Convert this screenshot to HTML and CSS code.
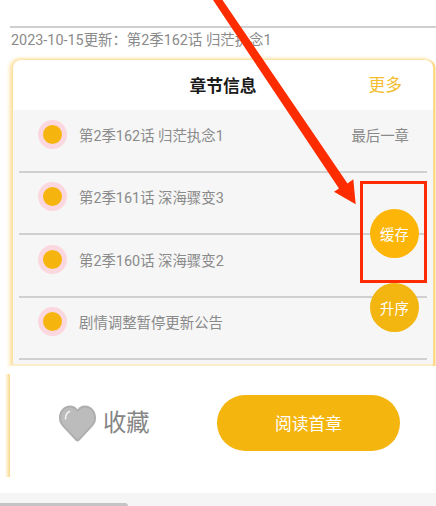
FILE: index.html
```html
<!DOCTYPE html>
<html lang="zh">
<head>
<meta charset="utf-8">
<title>章节信息</title>
<link rel="stylesheet" href="styles.css">
</head>
<body>
<div class="page">
  <div class="rule"></div>
  <p class="update">2023-10-15更新：第2季162话 归茫执念1</p>
  <section class="card">
    <header class="card-head">
      <h2 class="card-title">章节信息</h2>
      <span class="more">更多</span>
    </header>
    <ul class="list">
      <li class="row"><span class="dot"></span><span class="name">第2季162话 归茫执念1</span><span class="tag">最后一章</span></li>
      <li class="row"><span class="dot"></span><span class="name">第2季161话 深海骤变3</span></li>
      <li class="row"><span class="dot"></span><span class="name">第2季160话 深海骤变2</span></li>
      <li class="row"><span class="dot"></span><span class="name">剧情调整暂停更新公告</span></li>
    </ul>
  </section>
  <div class="bar">
    <div class="fav">
      <svg class="heart" viewBox="0 0 37 37" aria-hidden="true">
        <path d="M18.500 36.500C17.500 36.500 16.800 35.800 15.800 34.800L3.500 21.500C.5 18.200 0 15.500 0 12.500C0 5.500 5 .5 11 .5C14 .5 17 2 18.500 4.500C20 2 23 .5 26 .5C32 .5 37 5.500 37 12.500C37 15.500 36.500 18.200 33.500 21.500L21.200 34.800C20.200 35.800 19.500 36.500 18.500 36.500Z" fill="#aeaeae"/>
        <path d="M18.500 34C17.800 34 17.300 33.500 16.800 33L5 20.500C2.500 17.500 2 15 2 12.500C2 6.500 6.200 2.500 11 2.500C14 2.500 17 4.500 18.500 7.500C20 4.500 23 2.500 26 2.500C30.800 2.500 35 6.500 35 12.500C35 15 34.500 17.500 32 20.500L20.200 33C19.700 33.500 19.200 34 18.500 34Z" fill="#bcbcbc"/>
        <path d="M6.500 14C6.500 10 8 7.500 10.500 6.500" fill="none" stroke="#f2f2f2" stroke-width="1.600" stroke-linecap="round"/>
      </svg>
      <span class="fav-text">收藏</span>
    </div>
    <button class="read" type="button">阅读首章</button>
  </div>
  <div class="footer"><div class="thumb"></div></div>

  <div class="fab fab-cache">缓存</div>
  <div class="fab fab-sort">升序</div>
  <div class="mark-box"></div>
  <svg class="arrow" viewBox="0 0 436 506" aria-hidden="true">
    <path d="M213 0H222.500L347.500 183.500L353.300 179.300L355.700 204.300L334 191.700L339 188.500Z" fill="#ff2c00"/>
  </svg>
</div>
</body>
</html>
```
FILE: styles.css
```css
* { box-sizing: border-box; }
html, body { margin: 0; padding: 0; background: #fff; }
body { font-family: Roboto, "Noto Sans CJK SC", sans-serif; }

.page {
  position: relative;
  width: 436px;
  height: 506px;
  overflow: hidden;
  display: flex;
  flex-direction: column;
  background: #fff;
}

.rule {
  height: 2px;
  margin: 26px 0 0 10px;
  background: #cfcfcf;
  flex: none;
}
.update {
  margin: 3px 0 0 11px;
  height: 20px;
  font-size: 14.400px;
  line-height: 20px;
  color: #8a8a8a;
  white-space: nowrap;
  flex: none;
}

.card {
  flex: none;
  width: 420px;
  height: 306px;
  margin: 9px 0 0 13px;
  background: #fff;
  border-radius: 8px 8px 0 0;
  box-shadow: -2px 0 4px 1px #fcdd98, 0 -1px 2px #fde7b5, 2.500px 0 0 #fcd680;
  overflow: hidden;
}
.card-head {
  position: relative;
  height: 50px;
  padding-bottom: 1px;
  display: flex;
  align-items: center;
  justify-content: center;
}
.card-title {
  margin: 0;
  font-size: 16.800px;
  font-weight: 700;
  color: #1a1a1a;
}
.more {
  position: absolute;
  right: 31px;
  top: 13px;
  font-size: 16.800px;
  line-height: 24px;
  color: #f5bd30;
}

.list {
  margin: 0;
  padding: 0 6px;
  list-style: none;
  height: 256px;
  background: #f6f6f6;
  border-bottom: 2px solid #fdeecb;
}
.row {
  height: 62.600px;
  display: flex;
  align-items: center;
  padding: 0 18px 12.600px 18.500px;
  border-bottom: 2px solid #d0d0d0;
  font-size: 14.400px;
  color: #8a8a8a;
}
.dot {
  width: 29px;
  height: 29px;
  flex: none;
  border-radius: 50%;
  background: #f6b50e;
  border: 5px solid #fbd8df;
  margin-right: 12.500px;
}
.name { flex: 1; white-space: nowrap; }
.tag { white-space: nowrap; }

.bar {
  position: relative;
  flex: none;
  height: 111px;
  margin-left: 10px;
  padding: 3px 0 0 49px;
  background: #fff;
  display: flex;
  align-items: center;
  z-index: 1;
}
.bar::before {
  content: "";
  position: absolute;
  left: -5px;
  top: 8px;
  bottom: 0;
  width: 5px;
  background: linear-gradient(to right, #fff, #fbd888);
}
.fav {
  display: flex;
  align-items: center;
  width: 158px;
  flex: none;
}
.heart { width: 37px; height: 37px; flex: none; }
.fav-text {
  margin-left: 7px;
  font-size: 23.300px;
  line-height: 32px;
  color: #858585;
}
.read {
  width: 183px;
  height: 56px;
  border: 0;
  border-radius: 28px;
  background: #f4b50f;
  color: #fff;
  font: inherit;
  font-size: 16.800px;
}

.footer {
  flex: none;
  height: 13px;
  margin-top: 16px;
  background: #f5f5f5;
  position: relative;
}
.thumb {
  position: absolute;
  left: 0;
  bottom: 0;
  width: 128px;
  height: 3px;
  background: #c4c4c4;
  border-radius: 0 3px 0 0;
}

.fab {
  position: absolute;
  left: 370px;
  width: 49px;
  height: 49px;
  border-radius: 50%;
  display: flex;
  align-items: center;
  justify-content: center;
  font-size: 14.400px;
  color: #fff;
  z-index: 2;
}
.fab-cache { top: 209px; background: #fdb508; }
.fab-sort { top: 283px; background: #f3b50f; }

.mark-box {
  position: absolute;
  left: 360px;
  top: 181px;
  width: 67px;
  height: 102px;
  border: 3px solid #ff2c00;
  z-index: 3;
}
.arrow {
  position: absolute;
  left: 0;
  top: 0;
  width: 436px;
  height: 506px;
  z-index: 3;
  pointer-events: none;
}
```
